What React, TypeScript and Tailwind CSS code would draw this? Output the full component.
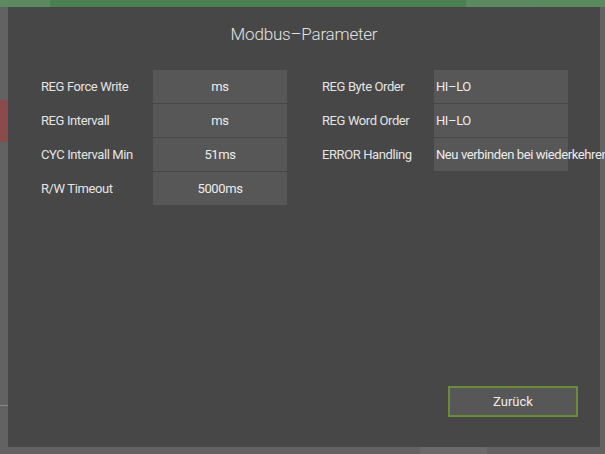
import React from "react";

// ============================================================================
// DATA
// ============================================================================

interface Param {
  label: string;
  value: string;
}

const leftParams: Param[] = [
  { label: "REG Force Write", value: "ms" },
  { label: "REG Intervall", value: "ms" },
  { label: "CYC Intervall Min", value: "51ms" },
  { label: "R/W Timeout", value: "5000ms" },
];

const rightParams: Param[] = [
  { label: "REG Byte Order", value: "HI–LO" },
  { label: "REG Word Order", value: "HI–LO" },
  { label: "ERROR Handling", value: "Neu verbinden bei wiederkehrendem Fehler" },
];

// ============================================================================
// PARAM ROW
// ============================================================================

function ParamRow({ param, align }: { param: Param; align: "center" | "left" }) {
  return (
    <div className="flex items-center h-[33px]">
      <span className="w-[112px] shrink-0 text-[13px] tracking-[-0.4px] text-[#e4e4e4]">
        {param.label}
      </span>
      <div
        className={`w-[134px] h-full bg-[#575757] flex items-center whitespace-nowrap text-[13px] tracking-[-0.4px] text-[#ececec] ${
          align === "center" ? "justify-center" : "justify-start pl-[2px]"
        }`}
      >
        {param.value}
      </div>
    </div>
  );
}

// ============================================================================
// MAIN
// ============================================================================

export default function App() {
  return (
    <div
      className="relative w-[605px] h-[454px] overflow-hidden bg-[#626262]"
      style={{ fontFamily: "Roboto, 'Noto Sans', sans-serif" }}
    >
      {/* ====== BACKGROUND PAGE ====== */}
      <div className="flex h-[7px]">
        <div className="w-[50px] bg-[#5b8a60]" />
        <div className="w-[416px] bg-[#4a7f52]" />
        <div className="w-[72px] bg-[#5b8a60]" />
        <div className="flex-1 bg-[#588a5e]" />
      </div>
      <div className="absolute left-0 top-[100px] w-[8px] h-[42px] bg-[#8a4b4b]" />
      <div className="absolute left-0 top-[405px] w-[8px] h-px bg-[#8a8a8a]" />
      <div className="absolute left-[420px] top-[447px] w-[67px] h-[7px] bg-[#6a6a6a]" />

      {/* ====== DIALOG ====== */}
      <div className="absolute left-[8px] top-[7px] w-[592px] h-[440px] bg-[#474747] flex flex-col">
        <h1 className="text-center text-[17px] font-light tracking-[-0.2px] text-[#e2e2e2] mt-[16px] leading-[22px]">
          Modbus–Parameter
        </h1>

        <div className="flex gap-[35px] pl-[33px] mt-[25px]">
          <div className="flex flex-col gap-px">
            {leftParams.map((p) => (
              <ParamRow key={p.label} param={p} align="center" />
            ))}
          </div>
          <div className="flex flex-col gap-px">
            {rightParams.map((p) => (
              <ParamRow key={p.label} param={p} align="left" />
            ))}
          </div>
        </div>

        <div className="mt-auto mb-[30px] flex justify-end pr-[22px]">
          <button className="w-[130px] h-[31px] bg-[#575757] border-2 border-[#6b8b3c] text-[13px] text-[#ececec]">
            Zurück
          </button>
        </div>
      </div>
    </div>
  );
}
